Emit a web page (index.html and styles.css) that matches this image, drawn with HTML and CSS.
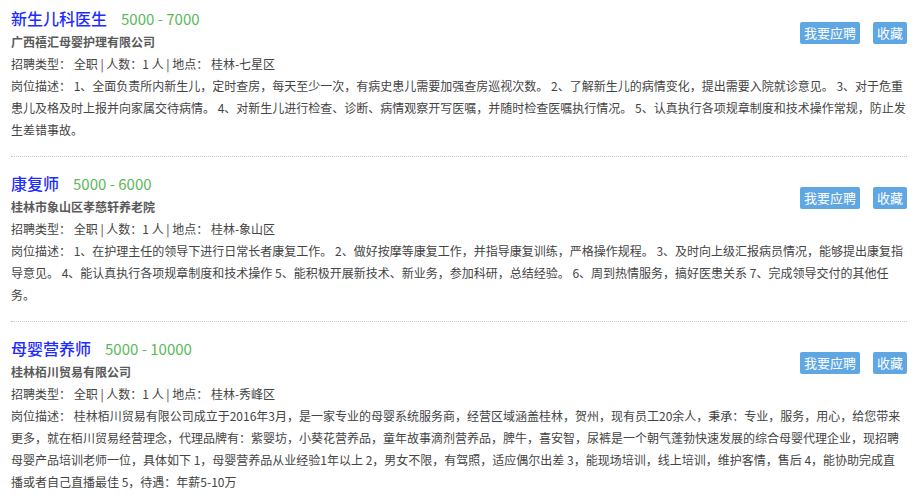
FILE: index.html
```html
<html>
<head>
	<title>招聘信息</title>
	<link rel="stylesheet" href="styles.css">
</head>
<body>
	<div class="list">
		<div class="job">
			<div class="head">
				<div class="info">
					<h2 class="name">新生儿科医生<span class="pay">5000 - 7000</span></h2>
					<div class="company">广西禧汇母婴护理有限公司</div>
				</div>
				<div class="actions">
					<input type="button" class="btn" value="我要应聘">
					<input type="button" class="btn" value="收藏">
				</div>
			</div>
			<div class="meta">招聘类型： 全职 | 人数：1 人 | 地点： 桂林-七星区</div>
			<div class="desc">岗位描述： 1、全面负责所内新生儿，定时查房，每天至少一次，有病史患儿需要加强查房巡视次数。 2、了解新生儿的病情变化，提出需要入院就诊意见。 3、对于危重患儿及格及时上报并向家属交待病情。 4、对新生儿进行检查、诊断、病情观察开写医嘱，并随时检查医嘱执行情况。 5、认真执行各项规章制度和技术操作常规，防止发生差错事故。</div>
		</div>
		<div class="job">
			<div class="head">
				<div class="info">
					<h2 class="name">康复师<span class="pay">5000 - 6000</span></h2>
					<div class="company">桂林市象山区孝慈轩养老院</div>
				</div>
				<div class="actions">
					<input type="button" class="btn" value="我要应聘">
					<input type="button" class="btn" value="收藏">
				</div>
			</div>
			<div class="meta">招聘类型： 全职 | 人数：1 人 | 地点： 桂林-象山区</div>
			<div class="desc">岗位描述： 1、在护理主任的领导下进行日常长者康复工作。 2、做好按摩等康复工作，并指导康复训练，严格操作规程。 3、及时向上级汇报病员情况，能够提出康复指导意见。 4、能认真执行各项规章制度和技术操作 5、能积极开展新技术、新业务，参加科研，总结经验。 6、周到热情服务，搞好医患关系 7、完成领导交付的其他任务。</div>
		</div>
		<div class="job">
			<div class="head">
				<div class="info">
					<h2 class="name">母婴营养师<span class="pay">5000 - 10000</span></h2>
					<div class="company">桂林栢川贸易有限公司</div>
				</div>
				<div class="actions">
					<input type="button" class="btn" value="我要应聘">
					<input type="button" class="btn" value="收藏">
				</div>
			</div>
			<div class="meta">招聘类型： 全职 | 人数：1 人 | 地点： 桂林-秀峰区</div>
			<div class="desc">岗位描述： 桂林栢川贸易有限公司成立于2016年3月，是一家专业的母婴系统服务商，经营区域涵盖桂林，贺州，现有员工20余人，秉承：专业，服务，用心，给您带来更多，就在栢川贸易经营理念，代理品牌有：紫婴坊，小葵花营养品，童年故事滴剂营养品，脾牛，喜安智，尿裤是一个朝气蓬勃快速发展的综合母婴代理企业，现招聘母婴产品培训老师一位，具体如下 1，母婴营养品从业经验1年以上 2，男女不限，有驾照，适应偶尔出差 3，能现场培训，线上培训，维护客情，售后 4，能协助完成直播或者自己直播最佳 5，待遇：年薪5-10万</div>
		</div>
	</div>
</body>
</html>
```

FILE: styles.css
```css
* {
	box-sizing: border-box;
}

body{
	margin: 0;
	background: #fff;
	font-family: "Noto Sans CJK SC", "Noto Sans", sans-serif;
	color: #444;
}

div.list{
	padding: 0 10px 0 11px;
}

div.job{
	padding: 14px 0 15px 0;
	border-bottom: 1px dotted #c8c8c8;
}

div.job:first-child{
	padding-top: 6px;
}

div.head{
	display: flex;
	justify-content: space-between;
}

h2.name{
	margin: 0;
	font-size: 16px;
	line-height: 24px;
	font-weight: 500;
	color: #1e2cff;
}

span.pay{
	margin-left: 14px;
	font-size: 15px;
	font-weight: normal;
	color: #5cb85c;
}

div.company{
	font-size: 12px;
	line-height: 22px;
	font-weight: bold;
	color: #5a5a5a;
}

div.actions{
	display: flex;
	gap: 13px;
	margin-top: 16px;
}

input.btn{
	height: 22px;
	padding: 0 4px;
	border: none;
	border-radius: 2px;
	background: #5fa7e2;
	color: #fff;
	font-family: "Noto Sans CJK SC", sans-serif;
	font-size: 13px;
	line-height: 22px;
}

div.meta, div.desc{
	font-size: 12px;
	line-height: 22px;
	color: #444;
}
```
